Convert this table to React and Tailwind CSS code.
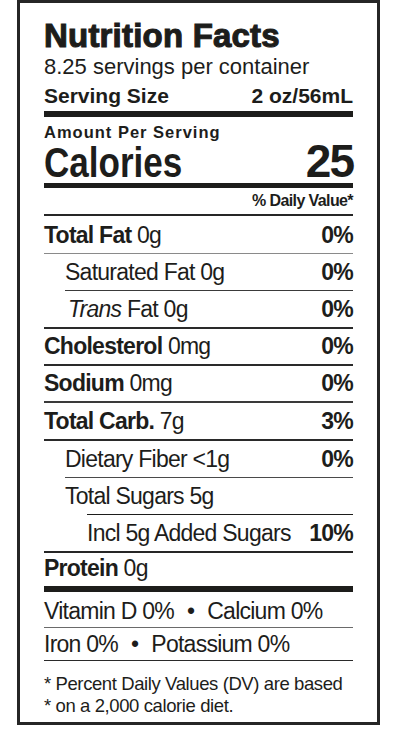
import React from 'react'

function Row({ className, label, amount, dv, italic }) {
  return (
    <div className={`flex items-end justify-between pb-[6px] text-[23px] leading-[23px] tracking-[-0.75px] ${className}`}>
      <span>
        {italic ? <i>{italic}</i> : null}
        {label}
        {amount}
      </span>
      {dv ? <span className="font-bold">{dv}</span> : null}
    </div>
  )
}

function App() {
  return (
    <div className="min-h-[745px] bg-white font-['Liberation_Sans',Arial,sans-serif] text-[#1d1d1b]">
      <div className="ml-[17px] w-[363px] border-[3px] border-[#262626] px-[24px] pt-[16px] pb-[5px]">
        <h1 className="text-[33px] leading-[33px] font-bold tracking-[0.2px] [-webkit-text-stroke:1.1px_#1d1d1b]">Nutrition Facts</h1>
        <p className="text-[22px] leading-[29px]">8.25 servings per container</p>
        <div className="flex justify-between text-[21px] leading-[30px] font-bold">
          <span>Serving Size</span>
          <span>2 oz/56mL</span>
        </div>
        <div className="h-[6px] bg-[#1d1d1b]" />

        <p className="mt-[6px] text-[16.5px] leading-[19px] font-bold tracking-[1px]">Amount Per Serving</p>
        <div className="mt-[1px] flex items-baseline justify-between leading-[36px] font-bold">
          <span className="inline-block origin-left scale-x-[0.815] text-[43px]">Calories</span>
          <span className="text-[46px] tracking-[-2px]">25</span>
        </div>
        <div className="mt-[3px] h-[5px] bg-[#1d1d1b]" />
        <p className="text-right text-[16px] leading-[26px] font-bold tracking-[-0.6px]">% Daily Value*</p>
        <div className="h-[2px] bg-[#262626]" />

        <Row className="h-[38px] border-b border-[#8a8a8a]" label={<b>Total Fat</b>} amount=" 0g" dv="0%" />
        <Row className="ml-[21px] h-[37px] border-b border-[#3a3a3a]" label="Saturated Fat 0g" dv="0%" />
        <Row className="h-[38px] border-b-2 border-[#2a2a2a] pl-[24px]" italic="Trans" label=" Fat 0g" dv="0%" />
        <Row className="h-[37px] border-b-2 border-[#2a2a2a]" label={<b>Cholesterol</b>} amount=" 0mg" dv="0%" />
        <Row className="h-[37px] border-b-2 border-[#3a3a3a]" label={<b>Sodium</b>} amount=" 0mg" dv="0%" />
        <Row className="h-[38px] border-b-2 border-[#2a2a2a]" label={<b>Total Carb.</b>} amount=" 7g" dv="3%" />
        <Row className="ml-[21px] h-[37px] border-b border-[#4a4a4a]" label="Dietary Fiber <1g" dv="0%" />
        <Row className="ml-[43px] h-[37px] border-b border-[#1d1d1b] [&>span]:-ml-[22px]" label="Total Sugars 5g" />
        <Row className="h-[38px] border-b-2 border-[#262626] pl-[43px]" label="Incl 5g Added Sugars" dv="10%" />
        <Row className="h-[39px] border-b-[6px] border-[#1d1d1b]" label={<b>Protein</b>} amount=" 0g" />

        <div className="flex h-[36px] items-end border-b border-[#6a6a6a] pb-[4px] text-[23px] leading-[23px] tracking-[-0.75px]">
          <span>Vitamin D 0%</span>
          <span className="mx-[13px]">•</span>
          <span>Calcium 0%</span>
        </div>
        <div className="flex h-[33px] items-end border-b border-[#2a2a2a] pb-[4px] text-[23px] leading-[23px] tracking-[-0.75px]">
          <span>Iron 0%</span>
          <span className="mx-[13px]">•</span>
          <span>Potassium 0%</span>
        </div>

        <div className="mt-[12px] text-[18.5px] leading-[22px] tracking-[-0.4px]">
          <p>* Percent Daily Values (DV) are based</p>
          <p>* on a 2,000 calorie diet.</p>
        </div>
      </div>
    </div>
  )
}

export default App
